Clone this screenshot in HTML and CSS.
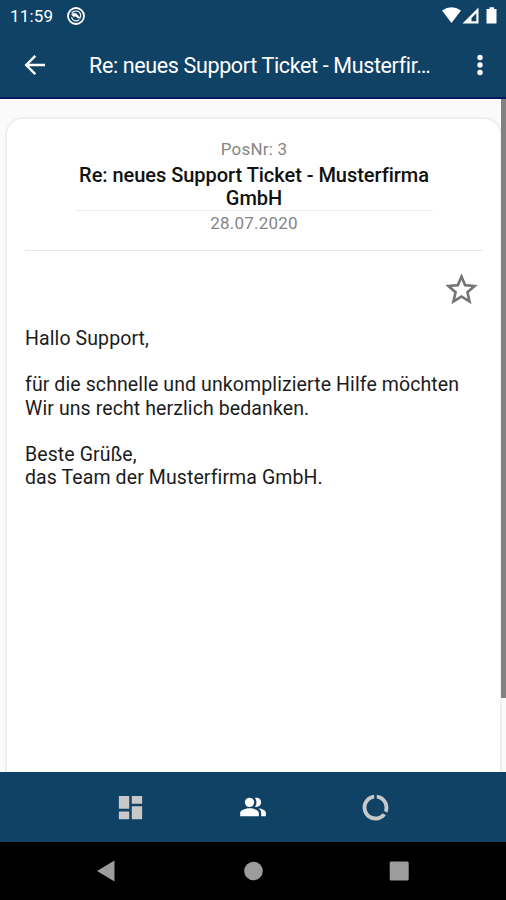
FILE: index.html
```
<!DOCTYPE html>
<html lang="de">
<head>
<meta charset="utf-8">
<title>Support Ticket</title>
<link rel="stylesheet" href="styles.css">
</head>
<body>
<div class="screen">
  <header class="top">
    <div class="status">
      <span class="clock">11:59</span>
      <svg class="notif" width="20" height="20" viewBox="0 0 20 20" fill="none" stroke="#fff"><circle cx="10" cy="10" r="8" stroke-width="1.800"/><path d="M5.600 7.200C8 4 13 4.200 14.600 8.200V11.500M5.600 11c.6 4 5.400 5 7.800 2.600" stroke-width="1.100"/><path d="M5.500 8.300C7.500 6.800 10 6.900 11 8.600L14.600 12.200 12 12 9.600 10.200 7.500 10.600z" fill="#fff" stroke-width=".6"/></svg>
      <svg class="sys" width="56" height="18" viewBox="0 0 56 18"><path d="M0 3.600Q9.500-3 19 3.600L9.500 16z" fill="#fff"/><path fill="#fff" fill-rule="evenodd" d="M20.500 16.400 36.500.6v15.800zM29.500 14.200h4.800V6.200l-4.800 4.900z"/><path d="M47.500.3h4.500v1.600h2.500v14.500H44.500V1.900h3z" fill="#fff"/></svg>
    </div>
    <div class="appbar">
      <svg class="back" width="24" height="24" viewBox="0 0 24 24" fill="none" stroke="#fff" stroke-width="2.400"><path d="M22 12H3.500M12.300 2.800 3.200 12l9.100 9.200"/></svg>
      <h1 class="title">Re: neues Support Ticket - Musterfir…</h1>
      <svg class="more" width="6" height="22" viewBox="0 0 6 22" fill="#fff"><circle cx="3" cy="3.500" r="2.700"/><circle cx="3" cy="11" r="2.700"/><circle cx="3" cy="18.500" r="2.700"/></svg>
    </div>
  </header>
  <main class="content">
    <article class="card">
      <div class="head">
        <div class="pos">PosNr: 3</div>
        <h2 class="subject">Re: neues Support Ticket - Musterfirma<br>GmbH</h2>
        <div class="date">28.07.2020</div>
      </div>
      <div class="actions">
        <svg width="39" height="39" viewBox="0 0 24 24" fill="#757575"><path d="M22 9.240l-7.190-.62L12 2 9.190 8.630 2 9.240l5.460 4.730L5.820 21 12 17.270 18.180 21l-1.630-7.030L22 9.240zM12 15.400l-3.760 2.270 1-4.280-3.320-2.880 4.380-.38L12 6.100l1.710 4.040 4.380.38-3.320 2.880 1 4.280L12 15.400z"/></svg>
      </div>
      <div class="body">Hallo Support,<br><br>für die schnelle und unkomplizierte Hilfe möchten<br>Wir uns recht herzlich bedanken.<br><br>Beste Grüße,<br>das Team der Musterfirma GmbH.</div>
    </article>
    <div class="scrollbar"></div>
  </main>
  <nav class="tabs">
    <svg width="31" height="31" viewBox="0 0 24 24" fill="#c8c8c8"><path d="M3 13h8V3H3v10zm0 8h8v-6H3v6zm10 0h8V11h-8v10zm0-18v6h8V3h-8z"/></svg>
    <svg width="28" height="28" viewBox="0 0 24 24" fill="#fff"><path d="M16.670 13.130C18.040 14.060 19 15.320 19 17v3h4v-3c0-2.180-3.570-3.470-6.330-3.870z"/><circle cx="9" cy="8" r="4"/><path d="M15 12c2.210 0 4-1.790 4-4s-1.790-4-4-4c-.47 0-.91.100-1.330.240C14.500 5.270 15 6.580 15 8s-.5 2.730-1.330 3.760c.42.140.860.240 1.330.240zM9 13c-2.670 0-8 1.340-8 4v3h16v-3c0-2.660-5.330-4-8-4z"/></svg>
    <svg width="31" height="31" viewBox="0 0 24 24" fill="#c8c8c8"><path d="M13 2.050v3.030c3.390.49 6 3.390 6 6.920 0 .9-.18 1.750-.48 2.540l2.600 1.530c.56-1.240.88-2.620.88-4.070 0-5.180-3.950-9.450-9-9.950zM12 19c-3.870 0-7-3.130-7-7 0-3.530 2.610-6.430 6-6.920V2.050c-5.060.5-9 4.760-9 9.950 0 5.520 4.470 10 9.990 10 3.310 0 6.240-1.610 8.060-4.090l-2.600-1.530C16.170 17.980 14.210 19 12 19z"/></svg>
  </nav>
  <div class="sysnav">
    <svg width="20" height="22" viewBox="0 0 20 22" fill="#9c9c9c"><path d="M0 11 17.500.5v21z"/></svg>
    <svg width="20" height="20" viewBox="0 0 20 20" fill="#9c9c9c"><circle cx="10.500" cy="10" r="9.300"/></svg>
    <svg width="20" height="20" viewBox="0 0 20 20" fill="#9c9c9c"><rect x=".7" y=".5" width="19" height="19" rx="1.500"/></svg>
  </div>
</div>
</body>
</html>
```
FILE: styles.css
```
* { box-sizing: border-box; }
body { margin: 0; font-family: Roboto, "Liberation Sans", sans-serif; }
svg { display: block; flex: none; }
.screen { width: 506px; height: 900px; display: flex; flex-direction: column; overflow: hidden; background: #fff; }
.top { height: 99px; flex: none; background: #104265; border-bottom: 2px solid #091a5c; color: #fff; }
.status { height: 32px; display: flex; align-items: center; padding: 0 8px 0 10px; }
.clock { font-size: 17px; width: 56px; letter-spacing: .2px; }
.sys { margin-left: auto; }
.appbar { height: 66px; display: flex; align-items: center; padding: 0 23px 0 23px; }
.title { margin: 0 0 0 42px; font-size: 21.500px; font-weight: 400; white-space: nowrap; letter-spacing: -.36px; flex: 1; }
.content { height: 673px; flex: none; display: flex; background: #fafafa; padding: 18px 0 0 5px; position: relative; overflow: hidden; }
.card { width: 497px; height: 700px; flex: none; background: #fff; border: 2px solid #efefef; border-radius: 18px; padding: 0 17px 0 18px; }
.head { text-align: center; height: 132px; border-bottom: 1px solid #e6e6e6; padding: 19px 50px 0; }
.pos, .date { font-size: 17px; line-height: 22px; color: #858585; letter-spacing: .2px; }
.date { padding-top: 1px; }
.subject { margin: 3px 0 0; padding-top: 1px; font-size: 20px; line-height: 23px; font-weight: 500; color: #111; white-space: nowrap; letter-spacing: -.04px; border-bottom: 1px solid #eee; height: 48px; }
.actions { display: flex; justify-content: flex-end; padding: 19px 2px 0 0; }
.body { margin-top: 18px; font-size: 19.500px; line-height: 23.200px; color: #1c1c1c; white-space: nowrap; letter-spacing: .1px; }
.scrollbar { position: absolute; right: 0; top: 0; width: 5px; height: 599px; background: #818181; }
.tabs { height: 70px; flex: none; background: #104265; display: flex; align-items: center; justify-content: center; gap: 93px; }
.sysnav { height: 58px; flex: none; background: #000; display: flex; align-items: center; justify-content: center; gap: 126px; }
```
